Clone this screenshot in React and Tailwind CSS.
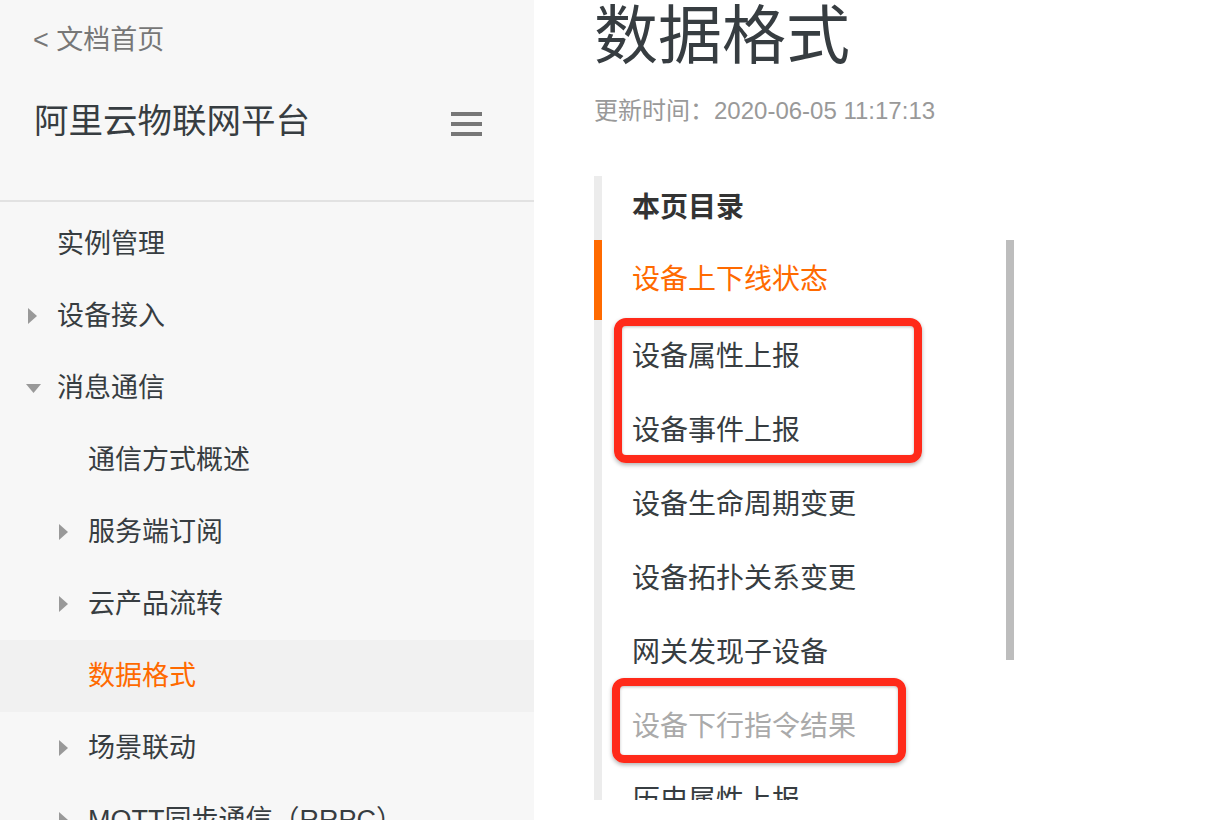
import React from 'react';

const FONT = { fontFamily: '"Liberation Sans", "Noto Sans CJK SC", sans-serif' };

const menu = [
  { label: '实例管理', level: 1 },
  { label: '设备接入', level: 1, arrow: 'right' },
  { label: '消息通信', level: 1, arrow: 'down' },
  { label: '通信方式概述', level: 2 },
  { label: '服务端订阅', level: 2, arrow: 'right' },
  { label: '云产品流转', level: 2, arrow: 'right' },
  { label: '数据格式', level: 2, active: true },
  { label: '场景联动', level: 2, arrow: 'right' },
  { label: 'MQTT同步通信（RRPC）', level: 2, arrow: 'right' },
];

const toc = [
  { label: '设备上下线状态', active: true },
  { label: '设备属性上报' },
  { label: '设备事件上报' },
  { label: '设备生命周期变更' },
  { label: '设备拓扑关系变更' },
  { label: '网关发现子设备' },
  { label: '设备下行指令结果', muted: true },
  { label: '历史属性上报' },
];

const Arrow = ({ dir }) =>
  dir === 'down' ? (
    <svg width="15" height="9" viewBox="0 0 15 9" className="-ml-[2px]">
      <path d="M0 0h15L7.5 9z" fill="#999" />
    </svg>
  ) : (
    <svg width="9" height="16" viewBox="0 0 9 16">
      <path d="M0 0l9 8-9 8z" fill="#999" />
    </svg>
  );

const Sidebar = () => (
  <aside className="w-[534px] shrink-0 bg-[#f7f7f7] h-full overflow-hidden">
    <div className="pt-[20px] pl-[33px] text-[27px] leading-[40px] text-[#777]">&lt; 文档首页</div>
    <div className="mt-[38px] flex items-center justify-between pl-[34px] pr-[52px] h-[48px]">
      <span className="text-[34.5px] text-[#373d41]">阿里云物联网平台</span>
      <div className="flex flex-col gap-[6px] w-[31px] mt-[3px]">
        <span className="h-[4px] bg-[#777]" />
        <span className="h-[4px] bg-[#777]" />
        <span className="h-[4px] bg-[#777]" />
      </div>
    </div>
    <div className="mt-[54px] border-b-2 border-[#e2e2e2]" />
    <ul className="pt-[6px]">
      {menu.map((m) => (
        <li
          key={m.label}
          className={`flex items-center h-[72px] text-[27px] whitespace-nowrap ${
            m.level === 1 ? 'pl-[28px]' : 'pl-[59px]'
          } ${m.active ? 'bg-[#f1f1f1] text-[#ff6a00]' : 'text-[#373d41]'}`}
        >
          <span className="w-[29px] flex items-center">{m.arrow && <Arrow dir={m.arrow} />}</span>
          <span>{m.label}</span>
        </li>
      ))}
    </ul>
  </aside>
);

const Toc = () => (
  <div className="mt-[49px] flex w-[420px] h-[624px] overflow-hidden">
    <div className="w-[8px] shrink-0 bg-[#ececec] flex flex-col">
      <div className="h-[64px] shrink-0" />
      <div className="h-[80px] shrink-0 bg-[#ff6a00]" />
    </div>
    <div className="flex-1 flex flex-col">
      <div className="h-[64px] shrink-0 pl-[30px] flex items-center text-[28px] font-bold text-[#333]">本页目录</div>
      <div className="flex shrink-0 items-start">
        <ul className="flex-1 pl-[30px]">
          {toc.map((t, i) => (
            <li
              key={t.label}
              className={`flex items-center text-[28px] whitespace-nowrap ${i === 0 ? 'h-[80px]' : 'h-[74px]'} ${
                t.active ? 'text-[#ff6a00]' : t.muted ? 'text-[#aaa]' : 'text-[#373d41]'
              }`}
            >
              {t.label}
            </li>
          ))}
        </ul>
        <div className="w-[8px] h-[420px] shrink-0 bg-[#bdbdbd]" />
      </div>
    </div>
  </div>
);

export default function App() {
  return (
    <div className="relative flex w-[1208px] h-[820px] overflow-hidden bg-white" style={FONT}>
      <Sidebar />
      <main className="flex-1 pl-[60px] pt-[4px]">
        <h1 className="text-[64px] leading-[64px] text-[#373d41]">数据格式</h1>
        <div className="mt-[27px] text-[24px] leading-[32px] text-[#999]">更新时间：2020-06-05 11:17:13</div>
        <Toc />
      </main>

      {/* annotation boxes */}
      <div className="absolute left-[614px] top-[318px] w-[308px] h-[145px] border-[8px] border-[#ff2a1a] rounded-[12px] shadow-[0_2px_4px_rgba(0,0,0,0.3),inset_0_1px_3px_rgba(0,0,0,0.25)]" />
      <div className="absolute left-[612px] top-[678px] w-[294px] h-[85px] border-[8px] border-[#ff2a1a] rounded-[12px] shadow-[0_2px_4px_rgba(0,0,0,0.3),inset_0_1px_3px_rgba(0,0,0,0.25)]" />
    </div>
  );
}
